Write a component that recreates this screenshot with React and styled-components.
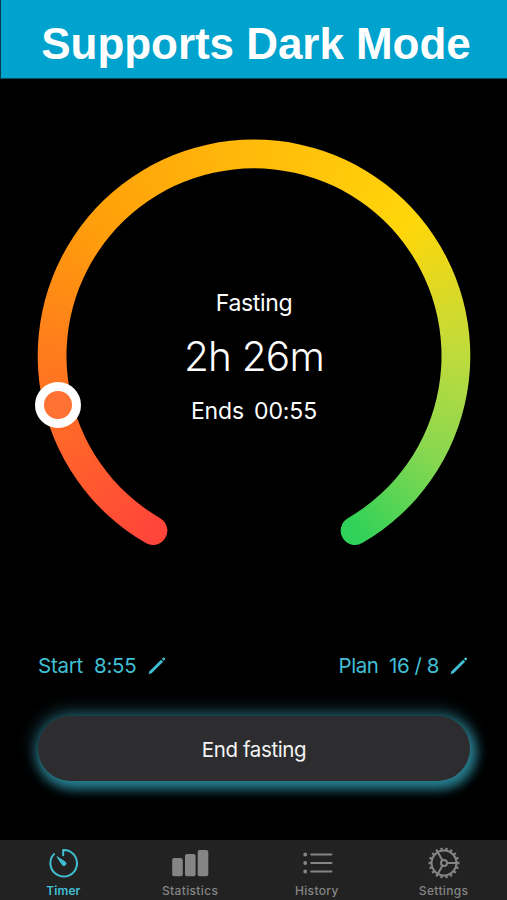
import React, { useState } from 'react'
import styled, { createGlobalStyle } from 'styled-components'

const GlobalStyle = createGlobalStyle`
*{
    box-sizing: border-box;
}
body{
    margin: 0;
    background: #000;
    font-family: 'Inter', 'Liberation Sans', sans-serif;
}
`

const MainContainer = styled.div`
width: 507px;
height: 900px;
overflow: hidden;
background: #000;
color: #fff;

display: flex;
flex-direction: column;
`

const Banner = styled.header`
height: 79px;
flex-shrink: 0;
background: #00a3ce;
border-left: 1px solid #06384a;
border-bottom: 1px solid #064d62;

display: flex;
justify-content: center;
padding: 17px 0 0 4px;
`

const BannerTitle = styled.h1`
margin: 0;
font-family: 'Liberation Sans', Arial, sans-serif;
font-weight: 700;
font-size: 44px;
line-height: 54px;
letter-spacing: -0.05px;
white-space: nowrap;
`

const Content = styled.main`
flex: 1;
display: flex;
flex-direction: column;
padding: 60px 37px 0;
`

const Dial = styled.section`
position: relative;
width: 434px;
height: 434px;
`

const Ring = styled.div`
position: absolute;
inset: 0;
background: conic-gradient(from 210deg at 217px 216.8px,
    #ff453a 0deg, #ff9f0a 100deg, #ffd60a 200deg,
    #bedb3c 240deg, #86d750 270deg, #30d158 300deg,
    #30d158 330deg, #ff453a 330deg);
clip-path: path('${props => props.$shape}');
`

const Knob = styled.div`
position: absolute;
left: ${props => props.$x}px;
top: ${props => props.$y}px;
width: 46px;
height: 46px;
margin: -23px 0 0 -23px;
border-radius: 50%;
border: 9.5px solid #fff;
background: #ff7231;
`

const Readout = styled.div`
height: 100%;
display: flex;
flex-direction: column;
align-items: center;
padding-top: 148.5px;
`

const Caption = styled.p`
margin: 0;
font-size: 23px;
line-height: 30px;
font-weight: 400;
letter-spacing: ${props => props.$tracking};
word-spacing: ${props => props.$gap || '0'};
white-space: nowrap;
`

const Remaining = styled.p`
margin: 14px 0 14px;
font-size: 40.5px;
line-height: 50px;
font-weight: 350;
letter-spacing: -0.8px;
white-space: nowrap;
`

const Options = styled.div`
display: flex;
justify-content: space-between;
margin-top: 79px;
padding: 0 2px 0 1px;
`

const Option = styled.button`
border: none;
padding: 0;
background: transparent;
color: #40bfd3;
font-family: inherit;
font-size: 20.5px;
line-height: 28px;
letter-spacing: ${props => props.$tracking};
cursor: pointer;

display: flex;
align-items: center;
gap: 11px;
`

const EndButton = styled.button`
height: 65px;
margin: 36px 0 0 1px;
padding: 2px 0 0;
width: 432px;
border: none;
border-radius: 33px;
background: #2d2c2f;
color: #f4f4f5;
font-family: inherit;
font-size: 20.5px;
letter-spacing: -0.4px;
cursor: pointer;
box-shadow: 3px 5px 11px 3px rgba(52, 174, 196, 0.65), 0 -1px 14px 7px rgba(52, 130, 150, 0.36);
`

const TabBar = styled.nav`
height: 60px;
flex-shrink: 0;
background: #222;
display: grid;
grid-template-columns: repeat(4, 1fr);
`

const Tab = styled.button`
border: none;
padding: 7px 0 0;
background: transparent;
color: ${props => props.$active ? '#40bfd3' : '#858585'};
font-family: inherit;
font-size: 12px;
font-weight: ${props => props.$active ? 600 : 500};
line-height: 16px;
letter-spacing: ${props => props.$active ? '0.1px' : '0.35px'};
cursor: pointer;

display: flex;
flex-direction: column;
align-items: center;
gap: 4px;
`

const TabIcon = styled.svg`
width: 32px;
height: 32px;
fill: none;
stroke: currentColor;
stroke-width: 2;
stroke-linecap: round;
stroke-linejoin: round;
`

// polar point, 0deg is at the top and the angle runs clockwise
const point = (r, deg, cx = 217, cy = 216.8) => {
    const a = deg * Math.PI / 180
    return `${(cx + r * Math.sin(a)).toFixed(2)} ${(cy - r * Math.cos(a)).toFixed(2)}`
}

const outer = 216.3
const inner = 187.5
const cap = (outer - inner) / 2

const ringShape = [
    `M${point(outer, 210)}`,
    `A${outer} ${outer} 0 1 1 ${point(outer, 150)}`,
    `A${cap} ${cap} 0 0 1 ${point(inner, 150)}`,
    `A${inner} ${inner} 0 1 0 ${point(inner, 210)}`,
    `A${cap} ${cap} 0 0 1 ${point(outer, 210)}Z`,
].join('')

const Pencil = () => (
    <svg width="18" height="18" viewBox="0 0 18 18" fill="currentColor">
        <path d="M.6 17.2l.9-3L13.1 2.7l2 2L3.6 16.3z" />
        <path d="M13.8 2l1-1c.6-.6 1.3-.6 1.9 0s.5 1.3-.1 1.9l-.9.9z" />
    </svg>
)

const TimerIcon = () => (
    <TabIcon viewBox="0 0 32 32">
        <path d="M16.2 8.2V2.9A13.3 13.3 0 1 1 7 7.1" />
        <path d="M10.3 9.9l8 5.2a2 2 0 0 1-2.8 2.9z" fill="currentColor" strokeWidth="1" />
    </TabIcon>
)

const StatisticsIcon = () => (
    <svg width="38" height="32" viewBox="0 0 38 32" fill="currentColor">
        <rect x="1.2" y="11" width="10.6" height="18.3" rx="2" />
        <rect x="14" y="7" width="10.6" height="22.3" rx="2" />
        <rect x="26.7" y="3" width="10.6" height="26.3" rx="2" />
    </svg>
)

const HistoryIcon = () => (
    <TabIcon viewBox="0 0 32 32">
        <path d="M10.2 7.5h20.2M10.2 16h20.2M10.2 24.5h20.2" />
        <path d="M4.2 7.5h.01M4.2 16h.01M4.2 24.5h.01" strokeWidth="3.8" />
    </TabIcon>
)

const teeth = Array.from({ length: 18 }, (_, i) => `M${point(13, i * 20 + 10, 16, 16)}L${point(15.4, i * 20 + 10, 16, 16)}`).join('')
const spokes = [90, 210, 330].map(a => `M${point(3, a, 16, 16)}L${point(12, a, 16, 16)}`).join('')

const SettingsIcon = () => (
    <TabIcon viewBox="0 0 32 32">
        <circle cx="16" cy="16" r="12.4" />
        <circle cx="16" cy="16" r="3" />
        <path d={spokes} />
        <path d={teeth} strokeWidth="2.3" strokeLinecap="butt" />
    </TabIcon>
)

const tabs = [
    { name: 'Timer', Icon: TimerIcon },
    { name: 'Statistics', Icon: StatisticsIcon },
    { name: 'History', Icon: HistoryIcon },
    { name: 'Settings', Icon: SettingsIcon },
]

const App = () => {

    const [active, setActive] = useState('Timer');

    return (
        <MainContainer>
            <GlobalStyle />
            <Banner>
                <BannerTitle>Supports Dark Mode</BannerTitle>
            </Banner>

            <Content>
                <Dial>
                    <Ring $shape={ringShape} />
                    <Knob $x={21.3} $y={266.3} />
                    <Readout>
                        <Caption $tracking="-0.35px">Fasting</Caption>
                        <Remaining>2h 26m</Remaining>
                        <Caption $tracking="-0.1px" $gap="3.5px">Ends 00:55</Caption>
                    </Readout>
                </Dial>

                <Options>
                    <Option $tracking="-0.25px">
                        <span>Start&nbsp; 8:55</span>
                        <Pencil />
                    </Option>
                    <Option $tracking="-0.45px">
                        <span>Plan&nbsp; 16 / 8</span>
                        <Pencil />
                    </Option>
                </Options>

                <EndButton>End fasting</EndButton>
            </Content>

            <TabBar>
                {tabs.map(({ name, Icon }) => (
                    <Tab key={name} $active={active === name} onClick={() => setActive(name)}>
                        <Icon />
                        {name}
                    </Tab>
                ))}
            </TabBar>
        </MainContainer>
    )
}

export default App
